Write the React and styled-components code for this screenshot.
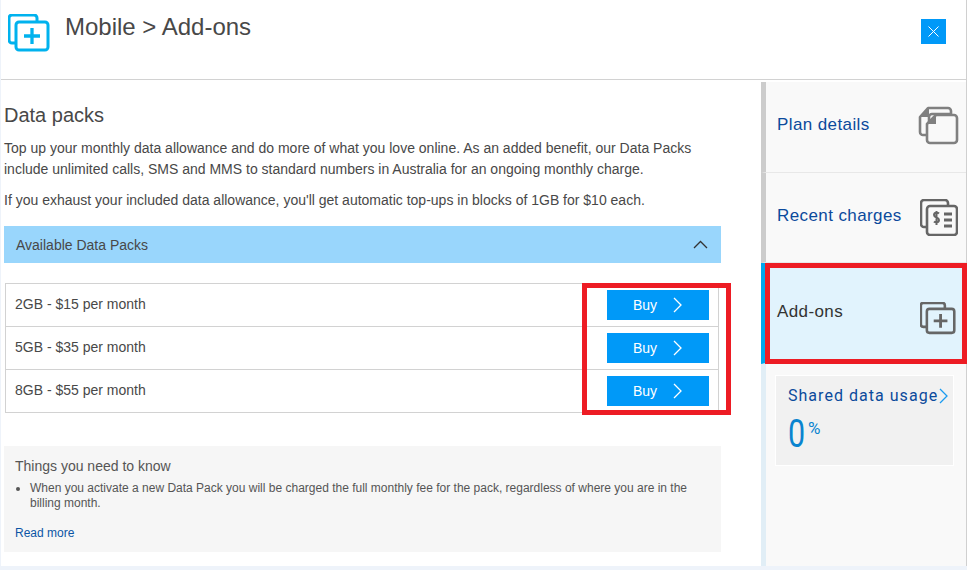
import React from "react";
import styled, { createGlobalStyle } from "styled-components";

const Global = createGlobalStyle`
  html, body { margin: 0; padding: 0; background: #eef3fa; }
  * { box-sizing: border-box; }
`;

const Page = styled.div`
  width: 967px;
  height: 570px;
  overflow: hidden;
  font-family: "Liberation Sans", Arial, sans-serif;
  color: #484848;
`;

const Dialog = styled.div`
  width: 966px;
  height: 566px;
  margin-left: 1px;
  background: #fff;
  border-right: 1px solid #d0d0d0;
  display: flex;
  flex-direction: column;
`;

const Header = styled.header`
  height: 80px;
  flex: none;
  border-bottom: 1px solid #d2d2d2;
  display: flex;
  align-items: flex-start;
  padding: 14px 20px 0 7px;
`;

const Title = styled.h1`
  margin: -1px 0 0 15px;
  font-size: 24px;
  line-height: 27px;
  font-weight: 400;
  flex: 1;
`;

const CloseButton = styled.button`
  width: 25px;
  height: 25px;
  margin-top: 5px;
  padding: 0;
  border: 0;
  background: #0099f8;
  display: flex;
  align-items: center;
  justify-content: center;
`;

const Body = styled.div`
  flex: 1;
  min-height: 0;
  display: flex;
`;

const Main = styled.main`
  width: 760px;
  flex: none;
  padding: 23px 0 0 3px;
`;

const Heading = styled.h2`
  margin: 0;
  font-size: 20px;
  line-height: 24px;
  font-weight: 400;
`;

const Paragraph = styled.p`
  margin: ${(p) => p.$margin || "0"};
  font-size: 14px;
  line-height: 21px;
  width: 720px;
`;

const Accordion = styled.div`
  width: 717px;
  height: 37px;
  margin-top: 15px;
  padding: 0 13px 0 12px;
  background: #99d6fc;
  font-size: 14px;
  display: flex;
  align-items: center;
  justify-content: space-between;
`;

const Table = styled.div`
  width: 714px;
  margin: 20px 0 0 1px;
  border: 1px solid #d2d2d2;
  border-bottom: 0;
`;

const Row = styled.div`
  height: 43px;
  padding: 0 9px 2px 9px;
  border-bottom: 1px solid #d2d2d2;
  font-size: 14px;
  display: flex;
  align-items: center;
  justify-content: space-between;
`;

const BuyButton = styled.button`
  width: 102px;
  height: 30px;
  margin-top: 1px;
  padding: 0 0 0 26px;
  border: 0;
  background: #0099f8;
  color: #fff;
  font-family: inherit;
  font-size: 14px;
  display: flex;
  align-items: center;
  gap: 15px;
`;

const Notice = styled.section`
  width: 717px;
  height: 106px;
  margin-top: 33px;
  padding: 12px 11px 0;
  background: #f6f6f6;
  color: #555;
`;

const NoticeTitle = styled.div`
  font-size: 14px;
  line-height: 16px;
`;

const NoticeList = styled.ul`
  margin: 7px 0 0;
  padding: 0 0 0 15px;
  font-size: 12px;
  line-height: 15px;
`;

const ReadMore = styled.a`
  display: block;
  margin-top: 15px;
  font-size: 12px;
  line-height: 15px;
  color: #0b55a5;
`;

const Side = styled.aside`
  flex: 1;
  margin-top: 2px;
  display: flex;
  flex-direction: column;
  background: #f9f9f9;
  border-left: 5px solid #e1eef6;
`;

const SideItem = styled.div`
  height: ${(p) => p.$height}px;
  flex: none;
  margin-left: -5px;
  padding: ${(p) => p.$padding};
  border-left: 5px solid ${(p) => (p.$active ? "#00a7ec" : "#cccccc")};
  border-bottom: 1px solid ${(p) => (p.$active ? "transparent" : "#e8e8e8")};
  background: ${(p) => (p.$active ? "#e1f3fd" : "#f9f9f9")};
  color: ${(p) => (p.$active ? "#333" : "#0b4a9c")};
  font-size: 17px;
  line-height: 20px;
  letter-spacing: 0.4px;
  display: flex;
  align-items: ${(p) => (p.$active ? "flex-start" : "center")};
  justify-content: space-between;
`;

const IconSlot = styled.span`
  display: flex;
  margin-top: ${(p) => p.$top}px;
`;

const UsageCard = styled.div`
  width: 179px;
  height: 91px;
  margin: 11px 0 0 9px;
  padding: 10px 0 0 12px;
  background: #f1f1f1;
  border: 1px solid #fff;
`;

const UsageLink = styled.div`
  font-family: Roboto, "Liberation Sans", sans-serif;
  font-size: 16px;
  line-height: 20px;
  letter-spacing: 1.03px;
  white-space: nowrap;
  color: #0b4a9c;
  display: flex;
  align-items: center;
`;

const UsageValue = styled.div`
  margin-top: 9px;
  font-family: Roboto, "Liberation Sans", sans-serif;
  font-size: 39px;
  line-height: 38px;
  color: #0a84cf;
  display: flex;
  align-items: flex-start;
`;

const Digit = styled.span`
  display: inline-block;
  width: 18px;
  transform: scaleX(0.78);
  transform-origin: left center;
`;

const Percent = styled.span`
  display: inline-block;
  font-size: 17px;
  line-height: 20px;
  margin: 3px 0 0 2px;
`;

const Highlight = styled.div`
  position: absolute;
  left: ${(p) => p.$left}px;
  top: ${(p) => p.$top}px;
  width: ${(p) => p.$width}px;
  height: ${(p) => p.$height}px;
  border: 5px solid #ed1c24;
  pointer-events: none;
`;

const AddIcon = ({ color = "#00b2ee", size = 42, width = 3 }) => (
  <svg width={size} height={size * 38 / 42} viewBox="0 0 42 38" fill="none" stroke={color} strokeWidth={width} strokeLinejoin="round" style={{ flex: "none" }}>
    <path d="M8 29H4a3 3 0 0 1-3-3V4a3 3 0 0 1 3-3h22a3 3 0 0 1 3 3v4" />
    <rect x="8" y="8" width="32" height="28" rx="3" />
    <path d="M24 14v16M16 22h16" strokeWidth={width * 1.1} />
  </svg>
);

const PlanIcon = () => (
  <svg width="41" height="39" viewBox="0 0 41 39" fill="none" style={{ flex: "none" }}>
    <path d="M10 2h20a3 3 0 0 1 3 3v3H14a3 3 0 0 0-3 3v18H5a3 3 0 0 1-3-3V11z" stroke="#808080" strokeWidth="2.6" strokeLinejoin="round" />
    <path d="M2 11l9-9v9z" fill="#808080" />
    <path d="M18 9h18a3 3 0 0 1 3 3v22a3 3 0 0 1-3 3H12a3 3 0 0 1-3-3V18z" fill="#f9f9f9" stroke="#808080" strokeWidth="2.6" strokeLinejoin="round" />
    <path d="M9 18l9-9v9z" fill="#808080" />
  </svg>
);

const ChargesIcon = () => (
  <svg width="38" height="37" viewBox="0 0 38 37" fill="none" stroke="#666" strokeWidth="2.6" style={{ flex: "none" }}>
    <path d="M7 28H4a3 3 0 0 1-3-3V4a3 3 0 0 1 3-3h21a3 3 0 0 1 3 3v3" />
    <rect x="7" y="7" width="30" height="29" rx="3" fill="#f9f9f9" />
    <path d="M19 14.500c-1-1-5-1.500-5 1.500s5 2 5 5-4 2.500-5 1.500M16.500 12v14" strokeWidth="2" />
    <path d="M24 15h8M24 21h8M24 27h8" strokeWidth="2.800" />
  </svg>
);

const Chevron = ({ color = "#fff" }) => (
  <svg width="11" height="16" viewBox="0 0 11 16" fill="none" stroke={color} strokeWidth="1.300" style={{ flex: "none" }}>
    <path d="M2 1l7 7-7 7" />
  </svg>
);

const packs = ["2GB - $15 per month", "5GB - $35 per month", "8GB - $55 per month"];

export default function App() {
  return (
    <Page>
      <Global />
      <Dialog>
        <Header>
          <AddIcon />
          <Title>Mobile &gt; Add-ons</Title>
          <CloseButton aria-label="Close">
            <svg width="11" height="11" viewBox="0 0 11 11" stroke="#fff" strokeWidth="1">
              <path d="M.5.5l10 10M10.500.5l-10 10" />
            </svg>
          </CloseButton>
        </Header>
        <Body>
          <Main>
            <Heading>Data packs</Heading>
            <Paragraph $margin="11px 0 0">
              Top up your monthly data allowance and do more of what you love online. As an added benefit, our Data Packs include unlimited calls, SMS and MMS to standard numbers in Australia for an ongoing monthly charge.
            </Paragraph>
            <Paragraph $margin="10px 0 0">
              If you exhaust your included data allowance, you'll get automatic top-ups in blocks of 1GB for $10 each.
            </Paragraph>
            <Accordion>
              Available Data Packs
              <svg width="15" height="9" viewBox="0 0 15 9" fill="none" stroke="#333" strokeWidth="1.300">
                <path d="M1 8l6.500-6.500L14 8" />
              </svg>
            </Accordion>
            <Table>
              {packs.map((pack) => (
                <Row key={pack}>
                  {pack}
                  <BuyButton>
                    Buy
                    <Chevron />
                  </BuyButton>
                </Row>
              ))}
            </Table>
            <Notice>
              <NoticeTitle>Things you need to know</NoticeTitle>
              <NoticeList>
                <li>When you activate a new Data Pack you will be charged the full monthly fee for the pack, regardless of where you are in the billing month.</li>
              </NoticeList>
              <ReadMore>Read more</ReadMore>
            </Notice>
          </Main>
          <Side>
            <SideItem $height={91} $padding="0 7px 4px 11px">
              Plan details
              <PlanIcon />
            </SideItem>
            <SideItem $height={90} $padding="0 8px 4px 11px">
              Recent charges
              <IconSlot $top={4}>
                <ChargesIcon />
              </IconSlot>
            </SideItem>
            <SideItem $active $height={101} $padding="39px 10px 0 11px">
              Add-ons
              <IconSlot $top={0}>
                <AddIcon color="#666" size={36} width={3} />
              </IconSlot>
            </SideItem>
            <UsageCard>
              <UsageLink>
                Shared data usage
                <Chevron color="#1a9bf0" />
              </UsageLink>
              <UsageValue>
                <Digit>0</Digit>
                <Percent>%</Percent>
              </UsageValue>
            </UsageCard>
          </Side>
        </Body>
      </Dialog>
      <Highlight $left={582} $top={283} $width={149} $height={132} />
      <Highlight $left={765} $top={263} $width={202} $height={101} />
    </Page>
  );
}
